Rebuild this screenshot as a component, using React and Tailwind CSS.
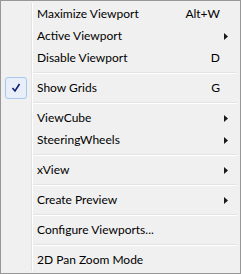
import React from 'react';

const items = [
  { label: 'Maximize Viewport', shortcut: 'Alt+W' },
  { label: 'Active Viewport', sub: true },
  { label: 'Disable Viewport', shortcut: 'D' },
  { sep: true },
  { label: 'Show Grids', shortcut: 'G', checked: true },
  { sep: true },
  { label: 'ViewCube', sub: true },
  { label: 'SteeringWheels', sub: true },
  { sep: true },
  { label: 'xView', sub: true },
  { sep: true },
  { label: 'Create Preview', sub: true },
  { sep: true },
  { label: 'Configure Viewports...' },
  { sep: true },
  { label: '2D Pan Zoom Mode' },
];

function Check() {
  return (
    <div className="w-[22px] h-[22px] ml-[2px] rounded-[3px] border border-[#a9c6ec] bg-[#e8eff9] flex items-center justify-center">
      <svg width="10" height="10" viewBox="0 0 10 10">
        <path d="M1.5 5 L4 8 L8.5 1" fill="none" stroke="#0e1e78" strokeWidth="1.6" />
      </svg>
    </div>
  );
}

function Row({ item }) {
  return (
    <div className="flex h-[22px] items-center">
      <div className="w-[28px] shrink-0 flex items-center">{item.checked && <Check />}</div>
      <div className="w-[2px] self-stretch flex">
        <div className="w-px bg-[#e2e3e3]" />
        <div className="w-px bg-white" />
      </div>
      <span className="ml-[4px] flex-1">{item.label}</span>
      {item.shortcut && <span className="mr-[18px]">{item.shortcut}</span>}
      {item.sub && (
        <svg className="mr-[10px]" width="4" height="7" viewBox="0 0 4 7">
          <path d="M0 0 L4 3.5 L0 7 Z" fill="#1a1a1a" />
        </svg>
      )}
    </div>
  );
}

function Separator() {
  return (
    <div className="flex h-[8px]">
      <div className="w-[28px] shrink-0" />
      <div className="w-[2px] flex">
        <div className="w-px bg-[#e2e3e3]" />
        <div className="w-px bg-white" />
      </div>
      <div className="flex-1 flex flex-col justify-center pr-[1px]">
        <div className="h-px bg-[#e2e3e3]" />
        <div className="h-px bg-white" />
      </div>
    </div>
  );
}

export default function App() {
  return (
    <div
      className="w-[241px] h-[274px] bg-[#f0f0f0] border border-[#979797] p-[2px] text-[12px] text-black"
      style={{ fontFamily: 'Lato, sans-serif' }}
    >
      {items.map((it, i) => (it.sep ? <Separator key={i} /> : <Row key={i} item={it} />))}
    </div>
  );
}
